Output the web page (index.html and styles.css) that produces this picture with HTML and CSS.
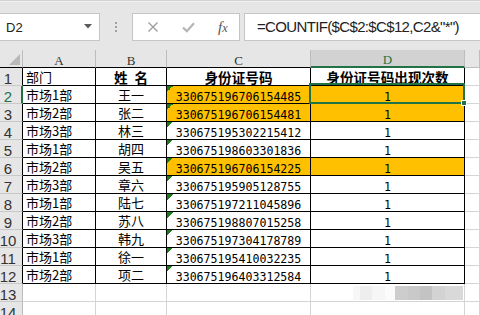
FILE: index.html
```html
<!DOCTYPE html>
<html lang="zh-CN">
<head>
    <meta charset="UTF-8">
    <title>身份证号码出现次数</title>
    <link rel="stylesheet" href="styles.css">
</head>
<body>
    <div class="toolbar">
        <div class="namebox">
            <span>D2</span>
            <svg class="caret" width="8" height="5" viewBox="0 0 8 5"><polygon points="0,0 8,0 4,4.5" fill="#5a5a5a"/></svg>
        </div>
        <div class="grip"><div class="dots"></div></div>
        <div class="fxbox">
            <svg width="12" height="12" viewBox="0 0 12 12"><path d="M1.5 1.5 L10.5 10.5 M10.5 1.5 L1.5 10.5" stroke="#9c9c9c" stroke-width="1.3" fill="none"/></svg>
            <svg width="13" height="11" viewBox="0 0 13 11"><path d="M1 5.5 L4.8 9.2 L12 1.2" stroke="#b4b4b4" stroke-width="2.2" fill="none"/></svg>
            <span class="fx">f<small>x</small></span>
        </div>
        <div class="formula">=COUNTIF($C$2:$C$12,C2&amp;"*")</div>
    </div>

    <div class="sheet">
        <div class="c corner"><svg width="11" height="11" viewBox="0 0 11 11"><polygon points="11,0 11,11 0,11" fill="#b9b9b9"/></svg></div>
        <div class="c ch tb">A</div>
        <div class="c ch tb">B</div>
        <div class="c ch tb">C</div>
        <div class="c ch tb sel">D</div>
        <div class="c ch last"></div>

        <div class="c rh in">1</div>
        <div class="c t cjk lft">部门</div>
        <div class="c t cjk ctr b">姓&ensp;名</div>
        <div class="c t cjk ctr b">身份证号码</div>
        <div class="c t cjk ctr b">身份证号码出现次数</div>
        <div class="c"></div>

        <div class="c rh in act">2</div>
        <div class="c t cjk lft">市场1部</div>
        <div class="c t cjk ctr">王一</div>
        <div class="c t num ctr mark hl">330675196706154485</div>
        <div class="c t num ctr hl">1</div>
        <div class="c"></div>

        <div class="c rh in">3</div>
        <div class="c t cjk lft">市场2部</div>
        <div class="c t cjk ctr">张二</div>
        <div class="c t num ctr mark hl">330675196706154481</div>
        <div class="c t num ctr hl">1</div>
        <div class="c"></div>

        <div class="c rh in">4</div>
        <div class="c t cjk lft">市场3部</div>
        <div class="c t cjk ctr">林三</div>
        <div class="c t num ctr mark">330675195302215412</div>
        <div class="c t num ctr">1</div>
        <div class="c"></div>

        <div class="c rh in">5</div>
        <div class="c t cjk lft">市场1部</div>
        <div class="c t cjk ctr">胡四</div>
        <div class="c t num ctr mark">330675198603301836</div>
        <div class="c t num ctr">1</div>
        <div class="c"></div>

        <div class="c rh in">6</div>
        <div class="c t cjk lft">市场2部</div>
        <div class="c t cjk ctr">吴五</div>
        <div class="c t num ctr mark hl">330675196706154225</div>
        <div class="c t num ctr hl">1</div>
        <div class="c"></div>

        <div class="c rh in">7</div>
        <div class="c t cjk lft">市场3部</div>
        <div class="c t cjk ctr">章六</div>
        <div class="c t num ctr mark">330675195905128755</div>
        <div class="c t num ctr">1</div>
        <div class="c"></div>

        <div class="c rh in">8</div>
        <div class="c t cjk lft">市场1部</div>
        <div class="c t cjk ctr">陆七</div>
        <div class="c t num ctr mark">330675197211045896</div>
        <div class="c t num ctr">1</div>
        <div class="c"></div>

        <div class="c rh in">9</div>
        <div class="c t cjk lft">市场2部</div>
        <div class="c t cjk ctr">苏八</div>
        <div class="c t num ctr mark">330675198807015258</div>
        <div class="c t num ctr">1</div>
        <div class="c"></div>

        <div class="c rh in">10</div>
        <div class="c t cjk lft">市场3部</div>
        <div class="c t cjk ctr">韩九</div>
        <div class="c t num ctr mark">330675197304178789</div>
        <div class="c t num ctr">1</div>
        <div class="c"></div>

        <div class="c rh in">11</div>
        <div class="c t cjk lft">市场1部</div>
        <div class="c t cjk ctr">徐一</div>
        <div class="c t num ctr mark">330675195410032235</div>
        <div class="c t num ctr">1</div>
        <div class="c"></div>

        <div class="c rh in">12</div>
        <div class="c t cjk lft">市场2部</div>
        <div class="c t cjk ctr">项二</div>
        <div class="c t num ctr mark">330675196403312584</div>
        <div class="c t num ctr">1</div>
        <div class="c"></div>

        <div class="c rh">13</div>
        <div class="c"></div>
        <div class="c"></div>
        <div class="c"></div>
        <div class="c"></div>
        <div class="c"></div>

        <div class="c rh">14</div>
        <div class="c"></div>
        <div class="c"></div>
        <div class="c"></div>
        <div class="c"></div>
        <div class="c"></div>

        <div class="active"></div>
        <div class="handle"></div>
        <div class="blur"></div>
    </div>
</body>
</html>
```

FILE: styles.css
```css
body{
    margin: 0;
    background: #fff;
    font-family: "Liberation Sans", Arial, sans-serif;
    overflow: hidden;
}

/* barra de formulas */
.toolbar{
    display: flex;
    align-items: flex-start;
    height: 50px;
    box-sizing: border-box;
    padding-top: 12px;
    background: #e6e6e6;
    border-top: 1px solid #d2d2d2;
    box-shadow: inset 0 1px 0 #f2f2f2;
}
.namebox{
    width: 100px;
    height: 28px;
    box-sizing: border-box;
    background: #fff;
    border: 1px solid #c6c6c6;
    border-left: none;
    display: flex;
    align-items: center;
    justify-content: space-between;
    padding: 0 7px 0 6px;
    font-size: 13px;
    color: #222;
}
.caret{
    margin-top: -2px;
}
.grip{
    width: 32px;
    height: 28px;
    display: flex;
    align-items: center;
    justify-content: center;
}
.dots{
    width: 2px;
    height: 10px;
    background: repeating-linear-gradient(#a0a0a0 0 2px, transparent 2px 4px);
}
.fxbox{
    width: 108px;
    height: 28px;
    box-sizing: border-box;
    background: #fff;
    border: 1px solid #c6c6c6;
    display: flex;
    align-items: center;
    padding-left: 14px;
    gap: 23px;
}
.fx{
    font-family: "Liberation Serif", serif;
    font-style: italic;
    font-size: 15px;
    color: #555;
}
.fx small{
    font-size: 12px;
}
.formula{
    flex: 1;
    height: 28px;
    box-sizing: border-box;
    margin-left: 4px;
    margin-right: -2px;
    background: #fff;
    border: 1px solid #c6c6c6;
    padding-left: 12px;
    font-size: 15px;
    letter-spacing: -0.65px;
    line-height: 26px;
    color: #222;
}

/* hoja */
.sheet{
    position: relative;
    display: grid;
    grid-template-columns: 23px 73px 71px 144px 154px 1fr;
    grid-auto-rows: 18px;
}
.c{
    box-sizing: border-box;
    border-right: 1px solid #d4d4d4;
    border-bottom: 1px solid #d4d4d4;
    display: flex;
    align-items: center;
    white-space: nowrap;
    overflow: hidden;
    line-height: 16px;
    color: #000;
}
.corner{
    background: #e6e6e6;
    border-right-color: #bdbdbd;
    border-bottom-color: #000;
    justify-content: flex-end;
    align-items: flex-end;
    padding: 0 2px 2px 0;
}
.ch{
    background: #e6e6e6;
    border-right-color: #bdbdbd;
    border-bottom-color: #bdbdbd;
    justify-content: center;
    padding-top: 4px;
    font-family: "Liberation Serif", serif;
    font-size: 13px;
    color: #333;
}
.ch.tb{
    border-bottom-color: #000;
}
.ch.sel{
    background: #d2d2d2;
    color: #217346;
    border-bottom: 2px solid #217346;
}
.rh{
    background: #e6e6e6;
    border-right-color: #bdbdbd;
    border-bottom-color: #c9c9c9;
    justify-content: center;
    padding: 4px 6px 0 0;
    font-size: 15px;
    color: #333;
}
.rh.in{
    border-right-color: #000;
}
.rh.act{
    color: #217346;
    border-right: 2px solid #217346;
    padding-right: 5px;
}
.t{
    border-right-color: #000;
    border-bottom-color: #000;
}
.cjk{
    font-family: "Noto Sans CJK SC", sans-serif;
    font-size: 13px;
    padding-top: 1px;
}
.cjk.b{
    font-weight: bold;
    font-size: 13.6px;
    padding-top: 0;
}
.num{
    font-family: "DejaVu Sans Mono", monospace;
    font-size: 11.6px;
    padding-top: 4px;
}
.lft{
    padding-left: 3px;
}
.ctr{
    justify-content: center;
}
.hl{
    background-color: #ffc000;
}
.mark{
    background-image: linear-gradient(135deg, #1b7b1b 50%, transparent 50%);
    background-size: 6px 6px;
    background-repeat: no-repeat;
}

/* celda activa */
.active{
    position: absolute;
    left: 309px;
    top: 33px;
    width: 156px;
    height: 21px;
    box-sizing: border-box;
    border: 2px solid #217346;
}
.handle{
    position: absolute;
    left: 461px;
    top: 50px;
    width: 6px;
    height: 6px;
    box-sizing: border-box;
    background: #217346;
    border: 1px solid #fff;
}
.blur{
    position: absolute;
    left: 353px;
    top: 236px;
    width: 110px;
    height: 14px;
    background: linear-gradient(90deg,
        #f7f7f7 0 7px, #eeeeee 7px 19px, #f6f6f6 19px 32px, #fbfbfb 32px 42px,
        #cdcdcd 42px 55px, #c9c9c9 55px 67px, #c3c3c3 67px 79px, #d3d3d3 79px 92px, #d9d9d9 92px 110px);
}
```
